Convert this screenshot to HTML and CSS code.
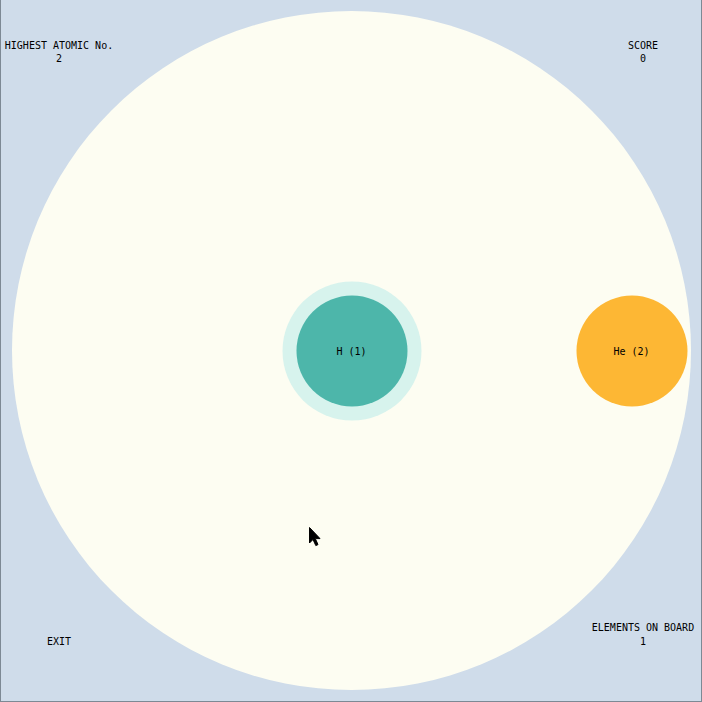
FILE: index.html
```
<!DOCTYPE html>
<html>
	<head>
		<meta charset="utf-8">
		<title>Element Merge</title>
		<link rel="stylesheet" href="styles.css">
	</head>
	<body>
		<div class = "stage">
			<!--The board with the atoms on it-->
			<div class = "board">
				<div class = "atom hydrogen">
					<div class = "core">H (1)</div>
				</div>
				<div class = "atom helium">
					<div class = "core">He (2)</div>
				</div>
				<svg class = "cursor" width="13" height="20" viewBox="0 0 13 20">
					<path d="M0.5 0.5 L0.5 16 L4 12.5 L6.8 18.6 L9 17.6 L6.3 11.6 L11 11.6 Z" fill="#000" stroke="#000" stroke-width="1"/>
				</svg>
			</div>

			<!--Scores and buttons in the corners-->
			<div class = "hud">
				<div class = "row">
					<div class = "info">HIGHEST ATOMIC No.<br>2</div>
					<div class = "info right">SCORE<br>0</div>
				</div>
				<div class = "row">
					<div class = "info exit">EXIT</div>
					<div class = "info right">ELEMENTS ON BOARD<br>1</div>
				</div>
			</div>
		</div>
	</body>
</html>
```

FILE: styles.css
```
body {
	margin: 0;
	font-family: 'DejaVu Sans Mono', monospace;
	font-size: 10px;
	color: #000;
}

.stage {
	width: 702px;
	height: 702px;
	box-sizing: border-box;
	display: grid;
	background-color: #cfdcea;
	border-left: 1px solid #7d8994;
	border-right: 1px solid #7d8994;
	border-bottom: 1px solid #7d8994;
	overflow: hidden;
}

.board, .hud {
	grid-area: 1 / 1;
}

/*The big round board*/
.board {
	position: relative;
	place-self: center;
	width: 679px;
	height: 679px;
	border-radius: 50%;
	background-color: #fdfdf2;
}

.atom {
	position: absolute;
	display: flex;
	align-items: center;
	justify-content: center;
	border-radius: 50%;
	transform: translate(-50%, -50%);
}

.core {
	width: 111px;
	height: 111px;
	border-radius: 50%;
	display: flex;
	align-items: center;
	justify-content: center;
	line-height: 13px;
}

.hydrogen {
	left: 340px;
	top: 340px;
	width: 139px;
	height: 139px;
	background-color: #d7f3ed;
}

.hydrogen .core {
	background-color: #4db6aa;
}

.helium {
	left: 620px;
	top: 340px;
}

.helium .core {
	background-color: #fdb734;
}

.cursor {
	position: absolute;
	left: 297px;
	top: 516px;
}

/*Corners*/
.hud {
	display: flex;
	flex-direction: column;
	justify-content: space-between;
	padding: 39px 0 53px 0;
	pointer-events: none;
}

.row {
	display: flex;
	justify-content: space-between;
	align-items: flex-end;
}

.row:first-child {
	align-items: flex-start;
}

.info {
	width: 116px;
	text-align: center;
	line-height: 13.4px;
}
```
